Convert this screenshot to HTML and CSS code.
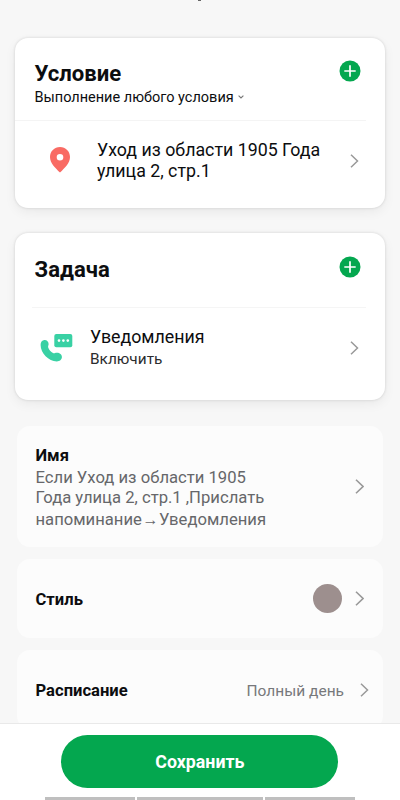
FILE: index.html
```html
<!DOCTYPE html>
<html lang="ru">
<head>
<meta charset="utf-8">
<meta name="viewport" content="width=device-width, initial-scale=1">
<title>Сценарий</title>
<link rel="stylesheet" href="styles.css">
</head>
<body>
<div class="screen">
  <main class="content">
    <div class="topbar"><i class="title-tail"></i></div>

    <section class="card condition">
      <header class="card-head">
        <div>
          <h2>Условие</h2>
          <div class="mode"><span>Выполнение любого условия</span><svg width="6" height="4" viewBox="0 0 6 4"><path d="M.6.6 3 3 5.4.6" fill="none" stroke="#777" stroke-width="1.100"/></svg></div>
        </div>
        <svg class="add" width="22" height="22" viewBox="0 0 22 22"><circle cx="11" cy="11" r="10.5" fill="#04a74f"/><path d="M11 5.3v11.4M5.3 11h11.4" stroke="#fff" stroke-width="1.7"/></svg>
      </header>
      <div class="row place">
        <svg class="pin" width="20" height="26" viewBox="0 0 20 26"><path fill="#f96b64" fill-rule="evenodd" d="M10 0C4.300 0 0 4.400 0 9.900 0 16 5.400 21 10 25.500 14.600 21 20 16 20 9.900 20 4.400 15.700 0 10 0Zm0 6.900a3.300 3.300 0 1 1 0 6.600 3.300 3.300 0 0 1 0-6.600Z"/></svg>
        <p>Уход из области 1905 Года<br>улица 2, стр.1</p>
        <svg class="chev" width="9" height="14" viewBox="0 0 9 14"><path d="M1 .7 7.500 7 1 13.300" fill="none" stroke="#999" stroke-width="1.500"/></svg>
      </div>
    </section>

    <section class="card task">
      <header class="card-head">
        <h2>Задача</h2>
        <svg class="add" width="22" height="22" viewBox="0 0 22 22"><circle cx="11" cy="11" r="10.5" fill="#04a74f"/><path d="M11 5.3v11.4M5.3 11h11.4" stroke="#fff" stroke-width="1.7"/></svg>
      </header>
      <div class="row notify">
        <svg class="call" width="34" height="30" viewBox="40 333 34 30"><rect x="54.300" y="334" width="18" height="13.300" rx="2" fill="#39d1a4"/><g fill="#fff"><circle cx="59" cy="340.600" r="1.300"/><circle cx="63.400" cy="340.600" r="1.300"/><circle cx="67.800" cy="340.600" r="1.300"/></g><path fill="#39d1a4" d="M43.600 340.200c2.800-.6 5.100 1.200 5 3.900 0 1.600-.8 2.200-.4 3.400.8 2.200 2.700 4.400 4.800 5.600 1.300.7 2-.2 3.600-.3 2.800-.2 5.300 1.500 5.300 4.200 0 2.500-2.300 4.400-5.100 4.400-8.200-.2-16.200-8.500-16.200-16.500 0-2.500 1.100-4.300 3-4.700Z"/></svg>
        <div class="notify-text"><p>Уведомления</p><span>Включить</span></div>
        <svg class="chev" width="9" height="14" viewBox="0 0 9 14"><path d="M1 .7 7.500 7 1 13.300" fill="none" stroke="#999" stroke-width="1.500"/></svg>
      </div>
    </section>

    <section class="item name">
      <div>
        <h3>Имя</h3>
        <p>Если Уход из области 1905<br>Года улица 2, стр.1 ,Прислать</p>
        <p class="last">напоминание<span class="arrow">→</span>Уведомления</p>
      </div>
      <svg class="chev" width="9" height="15" viewBox="0 0 9 15"><path d="M1 .7 8 7.500 1 14.300" fill="none" stroke="#999" stroke-width="1.600"/></svg>
    </section>

    <section class="item style">
      <h3>Стиль</h3>
      <span class="swatch"></span>
      <svg class="chev" width="9" height="15" viewBox="0 0 9 15"><path d="M1 .7 8 7.500 1 14.300" fill="none" stroke="#999" stroke-width="1.600"/></svg>
    </section>

    <section class="item schedule">
      <h3>Расписание</h3>
      <span class="value">Полный день</span>
      <svg class="chev" width="9" height="14" viewBox="0 0 9 14"><path d="M1 .7 7.500 7 1 13.300" fill="none" stroke="#999" stroke-width="1.500"/></svg>
    </section>
  </main>

  <footer class="footer">
    <button class="save">Сохранить</button>
    <div class="strip"><i></i><i></i><i></i></div>
  </footer>
</div>
</body>
</html>
```

FILE: styles.css
```css
* { box-sizing: border-box; }
body { margin: 0; background: #f7f7f7; color: #0c0d0f; font-family: Roboto, sans-serif; }
h2, h3, p { margin: 0; white-space: nowrap; }
svg { display: block; flex: none; }
.screen { display: flex; flex-direction: column; height: 800px; overflow: hidden; }
.content { flex: 1; min-height: 0; overflow: hidden; }
.topbar { display: flex; height: 38px; padding-left: 198px; }
.title-tail { width: 3px; height: 1px; background: #666; }

.card { margin: 0 15px; background: #fff; border-radius: 13px; box-shadow: 0 0 3px rgba(0, 0, 0, .14), 0 4px 12px rgba(0, 0, 0, .06); }
.card-head { display: flex; justify-content: space-between; }
.card h2 { font-size: 22.1px; line-height: 26px; font-weight: 700; }
.row { display: flex; align-items: center; }
.row .chev { margin-left: auto; }

.condition { height: 170px; }
.condition .card-head { height: 82px; padding: 22px 24px 0 19.5px; }
.mode { display: flex; align-items: center; gap: 4px; margin-top: 3px; font-size: 14.5px; line-height: 17px; white-space: nowrap; }
.mode svg { margin-bottom: 2px; }
.place { height: 80px; margin-right: 19px; padding: 0 7px 0 35px; border-top: 1px solid #f4f4f4; }
.place p { margin-left: 27px; margin-bottom: 1px; font-size: 17.8px; line-height: 21px; }
.place .pin { margin-bottom: 1px; }

.task { height: 167px; margin-top: 25px; }
.task .card-head { height: 74px; padding: 23px 24px 0 19.5px; }
.notify { height: 81px; margin: 0 19px 0 17px; padding: 0 7px 1px 8px; border-top: 1px solid #f5f5f5; }
.notify-text { margin: 0 0 2px 16px; font-size: 15.4px; line-height: 20px; }
.notify-text p { font-size: 17.8px; line-height: 24px; }
.notify-text span { color: #2b2c2e; }

.item { display: flex; align-items: center; margin: 0 17px; padding: 0 19px 0 18.5px; background: #fcfcfc; border-radius: 13px; }
.item h3 { font-size: 16.6px; line-height: 20px; font-weight: 700; }
.item .chev { margin-left: auto; }
.name { height: 121px; margin-top: 26px; }
.name h3 { margin-top: 3px; margin-bottom: 2px; }
.name p { color: #66676a; font-size: 16.65px; line-height: 20.5px; }
.name .last { margin-top: 1px; }
.arrow { display: inline-block; width: 17px; font-size: 16px; line-height: 16px; text-align: center; }
.style { height: 79px; margin-top: 12px; }
.style h3, .schedule h3, .value { margin-top: 3px; }
.swatch { width: 29px; height: 29px; margin-left: auto; border-radius: 50%; background: #9d8f8e; }
.style .chev { margin-left: 13px; }
.schedule { height: 79px; margin-top: 12px; padding-right: 14px; }
.value { margin-left: auto; color: #77787b; font-size: 15.5px; line-height: 20px; }
.schedule .chev { margin-left: 16px; }

.footer { flex: none; height: 77px; padding-top: 11px; border-top: 1px solid #e9e9e9; background: #fff; }
.save { display: block; width: 277px; height: 53px; margin: 0 0 0 61.4px; padding: 0; border: 0; border-radius: 27px; background: #04a74f; color: #fff; font: 700 17.8px/53px Roboto, sans-serif; }
.strip { display: grid; grid-template-columns: 90px 126px 90px; gap: 2px; width: 310px; margin: 9px 0 0 45px; }
.strip i { height: 3px; background: #bfbfbf; }
```
